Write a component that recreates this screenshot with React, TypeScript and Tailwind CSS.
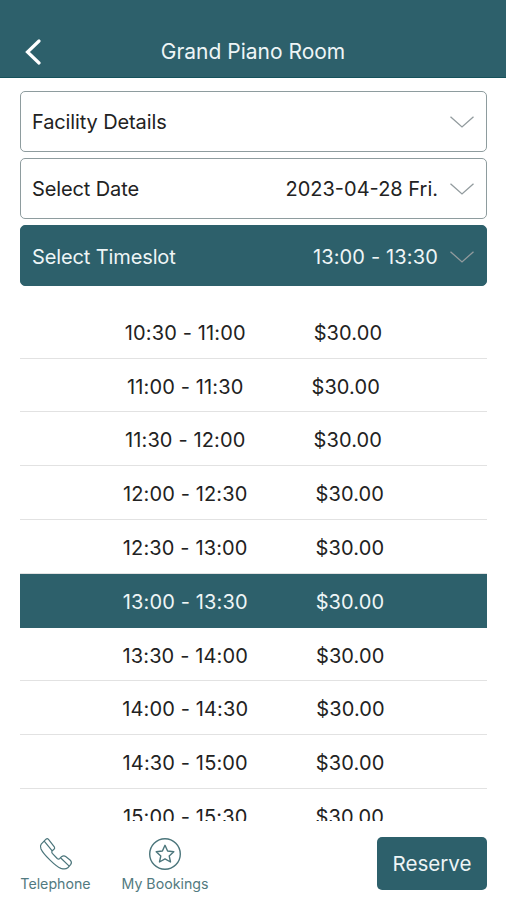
import clsx from 'clsx';

const slots: { time: string; price: string }[] = [
  { time: '10:30 - 11:00', price: '$30.00' },
  { time: '11:00 - 11:30', price: '$30.00' },
  { time: '11:30 - 12:00', price: '$30.00' },
  { time: '12:00 - 12:30', price: '$30.00' },
  { time: '12:30 - 13:00', price: '$30.00' },
  { time: '13:00 - 13:30', price: '$30.00' },
  { time: '13:30 - 14:00', price: '$30.00' },
  { time: '14:00 - 14:30', price: '$30.00' },
  { time: '14:30 - 15:00', price: '$30.00' },
  { time: '15:00 - 15:30', price: '$30.00' },
];

const selected = '13:00 - 13:30';

function Chevron() {
  return (
    <svg className="w-6 h-3 shrink-0" viewBox="0 0 24 12" fill="none" stroke="#929b9e" strokeWidth="1.3">
      <path d="M0.5 0.7 L12 11 L23.5 0.7" />
    </svg>
  );
}

function Panel({ label, value, active }: { label: string; value?: string; active?: boolean }) {
  return (
    <button
      className={clsx(
        'flex items-center w-full h-[61.5px] px-3 pt-[2px] rounded-[5px] border text-left',
        active ? 'bg-[#2d606b] border-[#2d606b] text-[#eef5f6]' : 'bg-white border-[#8e9c9e] text-[#222]'
      )}
    >
      <span className="flex-1 -ml-px tracking-[-0.12px]">{label}</span>
      {value && <span className={clsx('mr-3', active && 'tracking-[0.15px]')}>{value}</span>}
      <Chevron />
    </button>
  );
}

export default function App() {
  return (
    <div className="flex flex-col w-full h-[900px] overflow-hidden bg-white text-[20px] leading-6 font-['Inter','Liberation_Sans',sans-serif]">
      {/* Header */}
      <header className="grid grid-cols-[60px_1fr_60px] items-center h-[78px] shrink-0 pt-[26px] bg-[#2d606b] border-b border-[#15525b] text-[#eef5f6]">
        <button className="pl-[25px]">
          <svg className="w-4 h-[26px]" viewBox="0 0 16 26" fill="none" stroke="#fff" strokeWidth="3.2" strokeLinecap="round">
            <path d="M14 2 L2.5 13 L14 24" />
          </svg>
        </button>
        <h1 className="text-center text-[21px]">Grand Piano Room</h1>
      </header>

      {/* Options */}
      <div className="flex flex-col gap-[5.7px] shrink-0 pl-5 pr-[19px] pt-[12.5px]">
        <Panel label="Facility Details" />
        <Panel label="Select Date" value="2023-04-28 Fri." />
        <Panel label="Select Timeslot" value={selected} active />
      </div>

      {/* Timeslots */}
      <ul className="h-[516px] shrink-0 mt-[18.5px] ml-5 mr-[19px] overflow-hidden">
        {slots.map((slot) => (
          <li
            key={slot.time}
            className={clsx(
              'flex items-center justify-center gap-[68px] h-[53.8px] pt-[3px] border-b tracking-[0.13px]',
              slot.time === selected
                ? 'bg-[#2d606b] border-[#2d606b] text-[#eef5f6]'
                : 'border-[#e2e2e2] text-[#222]'
            )}
          >
            <span>{slot.time}</span>
            <span>{slot.price}</span>
          </li>
        ))}
      </ul>

      {/* Bottom bar */}
      <footer className="flex flex-1 items-start pl-5 pr-[19px] pt-4 text-[14.2px] leading-4 text-[#527a80]">
        <button className="flex flex-col items-center gap-[5px] w-[71px]">
          <svg className="w-[34px] h-[34px]" viewBox="0 0 34 34" fill="none" stroke="#4b757b" strokeWidth="1.2" strokeLinejoin="round">
            <path d="M2.2 7.2 L7 2.2 Q8.3 1.2 9.5 2.4 L15.3 9.8 Q16.2 11.2 15 12.3 L13 14 Q12.4 15.2 13.3 16.4 L18.2 21.5 Q19.4 22.5 20.6 21.7 L22.5 19.7 Q24.8 18.2 27 19.7 L31.3 23.2 Q33.2 25.3 31.8 27.4 L28.8 30.8 Q26.5 32.7 22 31.4 C17 29.8 4.5 17.5 2 12 Q.8 9 2.2 7.2 Z" />
            <path d="M5.2 4.2 L13.2 13.8 M21.5 20.8 L30.2 29.1" />
          </svg>
          <span>Telephone</span>
        </button>
        <button className="flex flex-col items-center gap-[5px] w-[90px] ml-[29px]">
          <svg className="w-[34px] h-[34px]" viewBox="0 0 34 34" fill="none" stroke="#4b757b" strokeWidth="1.4" strokeLinejoin="round">
            <circle cx="17" cy="17" r="15.3" />
            <path d="M17 8.3 L19.6 14 L25.8 14.7 L21.2 18.9 L22.5 25 L17 21.9 L11.5 25 L12.8 18.9 L8.2 14.7 L14.4 14 Z" />
          </svg>
          <span className="whitespace-nowrap">My Bookings</span>
        </button>
        <button className="w-[110px] h-[53px] ml-auto pt-px rounded-[5px] bg-[#2d606b] text-[20.6px] text-[#eef5f6]">Reserve</button>
      </footer>
    </div>
  );
}
